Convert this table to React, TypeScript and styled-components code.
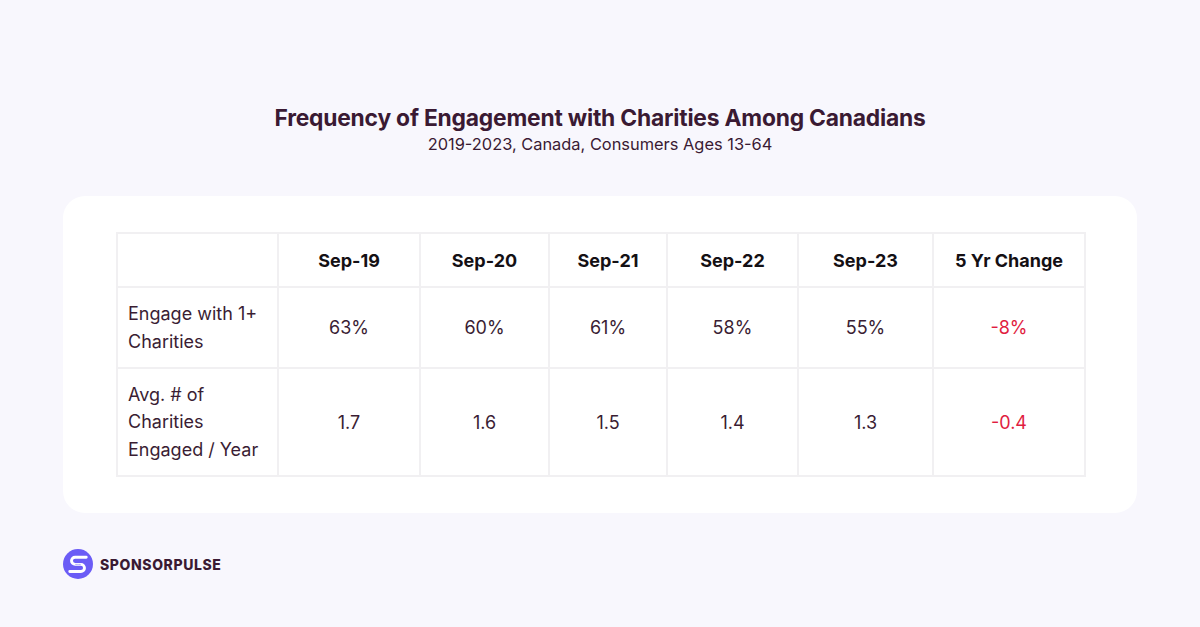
import styled, { createGlobalStyle } from 'styled-components';

const GlobalStyle = createGlobalStyle`
  body {
    margin: 0;
    background: #f8f7fd;
    font-family: Inter, "Liberation Sans", sans-serif;
  }
`

const Page = styled.div`
  width: 1200px;
  height: 627px;
  display: flex;
  flex-direction: column;
  background: #f8f7fd;
  color: #3a1d33;
`

const Header = styled.div`
  display: flex;
  flex-direction: column;
  align-items: center;
  padding-top: 105px;
`

const Title = styled.h1`
  margin: 0;
  font-size: 22.8px;
  line-height: 26px;
  font-weight: 700;
  letter-spacing: -0.2px;
  color: #3a1a33;
`

const Subtitle = styled.p`
  margin: 3px 0 0;
  font-size: 16.4px;
  line-height: 20px;
  color: #3a1a33;
`

const Card = styled.div`
  margin: 42px 63px 0;
  background: #ffffff;
  border-radius: 22px;
  padding: 36px 53px 36px;
`

const Table = styled.table`
  width: 968px;
  border-collapse: collapse;
  table-layout: fixed;
  font-size: 18px;
`

const HeadCell = styled.th<{ $w: number }>`
  width: ${p => p.$w}px;
  height: 52px;
  border: 2px solid #f1f0f2;
  font-weight: 700;
  color: #141014;
  text-align: center;
  padding: 0;
`

const Row = styled.tr<{ $h: number }>`
  height: ${p => p.$h}px;
`

const LabelCell = styled.td`
  border: 2px solid #f1f0f2;
  padding: 0 10px;
  text-align: left;
  line-height: 27.5px;
  color: #3a1d33;
`

const ValueCell = styled.td<{ $neg?: boolean }>`
  border: 2px solid #f1f0f2;
  text-align: center;
  padding: 0;
  color: ${p => (p.$neg ? '#e11d3f' : '#3a1d33')};
`

const Footer = styled.div`
  display: flex;
  align-items: center;
  gap: 7px;
  margin: 36px 0 0 63px;
`

const Brand = styled.span`
  font-size: 14px;
  font-weight: 800;
  letter-spacing: 0.6px;
  color: #3a1a33;
`

const cols = [
  { label: '', w: 159 },
  { label: 'Sep-19', w: 140 },
  { label: 'Sep-20', w: 127 },
  { label: 'Sep-21', w: 116 },
  { label: 'Sep-22', w: 129 },
  { label: 'Sep-23', w: 133 },
  { label: '5 Yr Change', w: 150 },
]

const rows = [
  { label: ['Engage with 1+', 'Charities'], values: ['63%', '60%', '61%', '58%', '55%'], change: '-8%', h: 81 },
  { label: ['Avg. # of', 'Charities', 'Engaged / Year'], values: ['1.7', '1.6', '1.5', '1.4', '1.3'], change: '-0.4', h: 108 },
]

const Logo = () => (
  <svg width="30" height="30" viewBox="0 0 31 31">
    <circle cx="15.5" cy="15.5" r="15.5" fill="#6b5cf6" />
    <path
      d="M24 8.5 H12.5 a3.7 3.7 0 0 0 0 7.4 H18.5 a3.7 3.7 0 0 1 0 7.4 H7"
      fill="none"
      stroke="#ffffff"
      strokeWidth="3"
      strokeLinecap="round"
    />
    <path d="M13 15.9 H18" stroke="#6b5cf6" strokeWidth="1" strokeDasharray="1 1" />
  </svg>
)

const App = () => {
  return (
    <Page>
      <GlobalStyle />
      <Header>
        <Title>Frequency of Engagement with Charities Among Canadians</Title>
        <Subtitle>2019-2023, Canada, Consumers Ages 13-64</Subtitle>
      </Header>
      <Card>
        <Table>
          <thead>
            <tr>
              {cols.map(c => (
                <HeadCell key={c.label} $w={c.w}>{c.label}</HeadCell>
              ))}
            </tr>
          </thead>
          <tbody>
            {rows.map(r => (
              <Row key={r.label[0]} $h={r.h}>
                <LabelCell>
                  {r.label.map((l, i) => (
                    <div key={i}>{l}</div>
                  ))}
                </LabelCell>
                {r.values.map((v, i) => (
                  <ValueCell key={i}>{v}</ValueCell>
                ))}
                <ValueCell $neg>{r.change}</ValueCell>
              </Row>
            ))}
          </tbody>
        </Table>
      </Card>
      <Footer>
        <Logo />
        <Brand>SPONSORPULSE</Brand>
      </Footer>
    </Page>
  )
}

export default App
